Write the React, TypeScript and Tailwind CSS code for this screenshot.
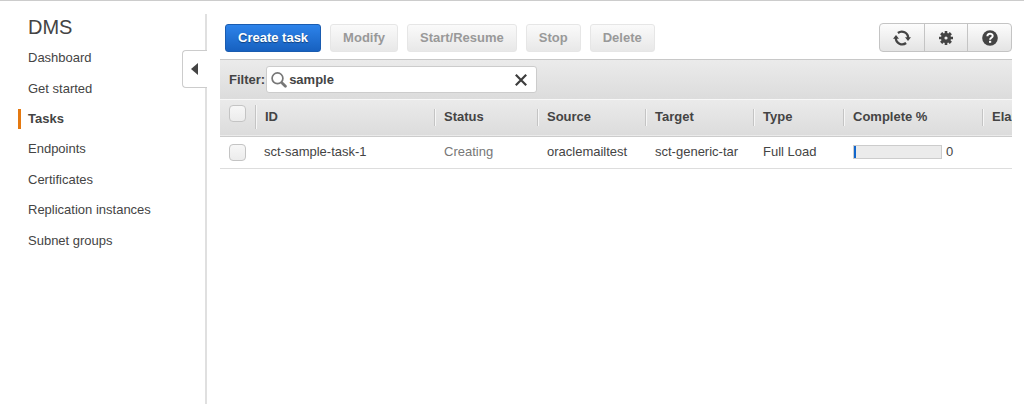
import { useState } from "react";

const navItems = [
  "Dashboard",
  "Get started",
  "Tasks",
  "Endpoints",
  "Certificates",
  "Replication instances",
  "Subnet groups",
];

const columns = ["Status", "Source", "Target", "Type", "Complete %", "Elapsed"];

const actions = ["Modify", "Start/Resume", "Stop", "Delete"];

const tasks = [
  {
    id: "sct-sample-task-1",
    status: "Creating",
    source: "oraclemailtest",
    target: "sct-generic-tar",
    type: "Full Load",
    complete: 0,
  },
];

function SearchIcon() {
  return (
    <svg className="size-4 shrink-0" viewBox="0 0 16 16" fill="none" stroke="#777" aria-hidden="true">
      <circle cx="6.5" cy="6.3" r="5.4" strokeWidth="1.7" />
      <path d="M10.4 10.2l1.2 1.2" strokeWidth="2" />
      <path d="M11.6 11.4l2.8 2.8" strokeWidth="2.8" strokeLinecap="round" />
    </svg>
  );
}

function ClearIcon() {
  return (
    <svg className="size-3" viewBox="0 0 12 12" fill="none" stroke="#3d3d3d" strokeWidth="2.2" aria-hidden="true">
      <path d="M.8.8l10.4 10.4M11.2.8L.8 11.2" />
    </svg>
  );
}

function RefreshIcon() {
  return (
    <svg className="h-4 w-[18px]" viewBox="0 0 18 16" aria-hidden="true">
      <g fill="none" stroke="#444" strokeWidth="2.3">
        <path d="M4.9 3A6.4 6.4 0 0 1 15.2 8" />
        <path d="M13.1 13A6.4 6.4 0 0 1 2.8 8" />
      </g>
      <path d="M12 7.2H18L15 11z" fill="#444" />
      <path d="M0 8.8h6L3 5z" fill="#444" />
    </svg>
  );
}

function GearIcon() {
  return (
    <svg className="size-[14px]" viewBox="0 0 14 14" fill="#444" aria-hidden="true">
      <path
        fillRule="evenodd"
        d="M5.7 0h2.6v2.1l1 .4 1.5-1.4 2.1 2.1-1.4 1.5.4 1H14v2.6h-2.1l-.4 1 1.4 1.5-2.1 2.1-1.5-1.4-1 .4V14H5.7v-2.1l-1-.4-1.5 1.4-2.1-2.1 1.4-1.5-.4-1H0V5.7h2.1l.4-1-1.4-1.5 2.1-2.1 1.5 1.4 1-.4zM7 5.4a1.6 1.6 0 1 0 0 3.2 1.6 1.6 0 0 0 0-3.2z"
      />
    </svg>
  );
}

function HelpIcon() {
  return (
    <svg className="size-4" viewBox="0 0 16 16" aria-hidden="true">
      <circle cx="8" cy="8" r="7.8" fill="#444" />
      <path d="M5.4 6.2C5.4 2.9 10.7 3 10.7 6c0 1.8-2.6 1.8-2.6 3.7" fill="none" stroke="#fff" strokeWidth="2" />
      <rect x="7" y="10.8" width="2.2" height="2" fill="#fff" />
    </svg>
  );
}

function Tick({ label }: { label: string }) {
  return (
    <input
      type="checkbox"
      aria-label={label}
      className="block size-[17px] appearance-none rounded border border-[#c4c4c4] bg-linear-to-b from-[#f7f7f7] to-[#ececec] checked:bg-[#1f6fd6]"
    />
  );
}

export default function App() {
  const [filter, setFilter] = useState("sample");
  const shown = tasks.filter((task) => task.id.includes(filter));

  return (
    <div className="flex min-h-screen border-t border-[#ccc] bg-white pt-[13px] font-['Liberation_Sans',Arial,sans-serif] text-[13px] leading-4 text-[#444]">
      <aside className="relative w-[207px] shrink-0 border-r-2 border-[#e0e0e0]">
        <h1 className="pl-7 text-xl leading-[26px]">DMS</h1>
        <nav className="mt-[3px] grid h-[213px] grid-rows-7 items-center pl-[18px]" aria-label="DMS">
          {navItems.map((item) => (
            <a
              key={item}
              href="#"
              className={
                item === "Tasks"
                  ? "border-l-3 border-[#e47911] py-[2px] pl-[7px] font-bold"
                  : "border-l-3 border-transparent py-[2px] pl-[7px]"
              }
            >
              {item}
            </a>
          ))}
        </nav>
        <button
          type="button"
          aria-label="Collapse navigation"
          className="absolute -right-[2px] top-9 flex h-[38px] w-[25px] items-center rounded-l border border-r-0 border-[#ccc] bg-white pl-2"
        >
          <svg className="h-3 w-[7px]" viewBox="0 0 7 12" fill="#444" aria-hidden="true">
            <path d="M7 0v12L0 6z" />
          </svg>
        </button>
      </aside>

      <main className="ml-[13px] mr-3 min-w-0 flex-1 pt-[9px]">
        <div className="flex items-center justify-between pl-[5px]">
          <div className="flex gap-[9px] font-bold">
            <button
              type="button"
              className="h-7 rounded-[3px] border border-[#1a5cb0] bg-linear-to-b from-[#2d83ea] to-[#1761c0] px-3 text-white text-shadow-[0_1px_1px_rgb(0_0_0/0.4)]"
            >
              Create task
            </button>
            {actions.map((action) => (
              <button
                key={action}
                type="button"
                disabled
                className="h-7 rounded-[3px] border border-[#e6e6e6] bg-linear-to-b from-[#fafafa] to-[#e8e8e8] px-3 text-[#999]"
              >
                {action}
              </button>
            ))}
          </div>
          <div className="flex h-[29px] divide-x divide-[#c4c4c4] rounded border border-[#c4c4c4] bg-linear-to-b from-[#fcfcfc] to-[#e4e4e4]">
            <button type="button" aria-label="Refresh" className="flex w-[45px] items-center justify-center">
              <RefreshIcon />
            </button>
            <button type="button" aria-label="Settings" className="flex w-[43px] items-center justify-center">
              <GearIcon />
            </button>
            <button type="button" aria-label="Help" className="flex w-[43px] items-center justify-center">
              <HelpIcon />
            </button>
          </div>
        </div>

        <div className="mt-[7px] flex h-10 items-center border-t border-[#c8c8c8] bg-linear-to-b from-[#ebebeb] to-[#dcdcdc] pl-[9px] font-bold">
          <label htmlFor="filter">Filter:</label>
          <div className="ml-px flex h-[27px] w-[271px] items-center rounded-[3px] border border-[#ccc] bg-white pl-1 pr-[9px]">
            <SearchIcon />
            <input
              id="filter"
              type="text"
              value={filter}
              onChange={(event) => setFilter(event.target.value)}
              className="ml-[2px] min-w-0 flex-1 bg-transparent outline-none"
            />
            <button type="button" aria-label="Clear filter" onClick={() => setFilter("")}>
              <ClearIcon />
            </button>
          </div>
        </div>

        <div className="overflow-hidden">
          <table className="w-full min-w-[862px] table-fixed border-collapse text-left">
            <colgroup>
              <col className="w-[35px]" />
              <col className="w-[179px]" />
              <col className="w-[103px]" />
              <col className="w-[108px]" />
              <col className="w-[108px]" />
              <col className="w-[90px]" />
              <col className="w-[139px]" />
              <col />
            </colgroup>
            <thead>
              <tr className="h-[37px] border-b border-[#ccc] bg-linear-to-b from-[#ebebeb] to-[#dcdcdc] shadow-[inset_0_1px_0_#f8f8f8]">
                <th className="pb-2 pl-[9px] pr-0 pt-0">
                  <Tick label="Select all tasks" />
                </th>
                <th className="p-0">
                  <div className="flex h-6 items-center border-l border-[#c4c4c4] pl-[9px] shadow-[inset_1px_0_0_#f6f6f6]">
                    ID
                  </div>
                </th>
                {columns.map((column) => (
                  <th key={column} className="p-0">
                    <div className="flex h-[17px] items-center whitespace-nowrap border-l border-[#c4c4c4] pl-[9px] shadow-[inset_1px_0_0_#f6f6f6]">
                      {column}
                    </div>
                  </th>
                ))}
              </tr>
            </thead>
            <tbody>
              {shown.map((task) => (
                <tr key={task.id} className="h-8 border-b border-[#ddd]">
                  <td className="pl-[9px]">
                    <Tick label={task.id} />
                  </td>
                  <td className="pl-[9px]">{task.id}</td>
                  <td className="pl-[10px] text-[#777]">{task.status}</td>
                  <td className="pl-[10px]">{task.source}</td>
                  <td className="pl-[10px]">{task.target}</td>
                  <td className="pl-[10px]">{task.type}</td>
                  <td className="pl-[10px]">
                    <div className="flex items-center gap-1">
                      <div
                        role="progressbar"
                        aria-label="Complete"
                        aria-valuenow={task.complete}
                        className="h-[14px] w-[89px] border border-[#ccc] bg-[#ebebeb]"
                      >
                        <div className="h-full min-w-[2px] bg-[#1166cc]" style={{ width: `${task.complete}%` }} />
                      </div>
                      {task.complete}
                    </div>
                  </td>
                  <td />
                </tr>
              ))}
            </tbody>
          </table>
        </div>
      </main>
    </div>
  );
}
